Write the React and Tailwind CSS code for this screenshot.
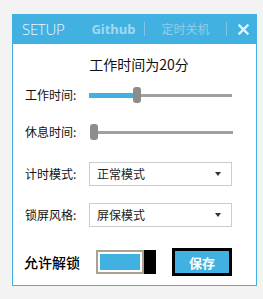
import { useState } from 'react';

const cjk = { fontFamily: '"Noto Sans CJK SC", "Noto Sans", sans-serif' };

function Slider({ value }) {
    // value in px of blue fill before thumb
    return (
        <div className="relative h-4 w-[143px] flex items-center">
            {value > 0 && <div className="h-[5px] bg-[#41b1e1]" style={{ width: value }} />}
            <div className="w-2 h-4 rounded-[3px] bg-[#8c8c8c] shrink-0" />
            <div className="flex-1 h-[3px] bg-[#a0a0a0]" />
        </div>
    );
}

function Select({ label }) {
    return (
        <div className="w-[143px] h-6 border border-[#cccccc] flex items-center justify-between pl-[7px] pr-[10px] bg-white">
            <span className="text-[12px] text-[#222] leading-none">{label}</span>
            <span className="w-0 h-0 border-l-[3px] border-r-[3px] border-t-[4px] border-l-transparent border-r-transparent border-t-[#333]" />
        </div>
    );
}

export default function App() {
    const [allow] = useState(true);

    return (
        <div className="w-[263px] h-[299px] bg-[#f3f3f3] pt-[14px] pl-[12px]" style={cjk}>
            <div className="w-[245px] h-[272px] border border-[#41b1e1] bg-white flex flex-col">
                <div className="h-[30px] bg-[#41b1e1] flex items-center -mx-px -mt-px pl-[10px]">
                    <span className="text-[15px] font-light text-[#eef8fd] tracking-[-0.3px] leading-none" style={{ fontFamily: '"Open Sans", sans-serif' }}>SETUP</span>
                    <span className="ml-[27px] text-[13px] font-bold text-[#a3d8f1] leading-none" style={{ fontFamily: '"Noto Sans", sans-serif' }}>Github</span>
                    <span className="ml-[9px] w-px h-[14px] bg-[#7cc7ea]" />
                    <span className="ml-[16px] text-[12px] text-[#8fcdea] leading-none">定时关机</span>
                    <span className="ml-[17px] w-px h-[14px] bg-[#7cc7ea]" />
                    <svg className="ml-[11px]" width="11" height="11" viewBox="0 0 11 11">
                        <path d="M1.5 1.5 L9.5 9.5 M9.5 1.5 L1.5 9.5" stroke="#e3f3fb" strokeWidth="2.4" strokeLinecap="square" />
                    </svg>
                </div>

                <div className="mt-[10px] h-5 flex items-center justify-center pl-[9px] text-[14px] text-[#111]">工作时间为20分</div>

                <div className="mt-[13px] flex items-center pl-[12px]">
                    <span className="w-[64px] text-[12px] text-[#111] leading-none">工作时间:</span>
                    <Slider value={44} />
                </div>

                <div className="mt-[21px] flex items-center pl-[12px]">
                    <span className="w-[64px] text-[12px] text-[#111] leading-none">休息时间:</span>
                    <div className="pl-px"><Slider value={0} /></div>
                </div>

                <div className="mt-[22px] flex items-center pl-[12px]">
                    <span className="w-[64px] text-[12px] text-[#111] leading-none">计时模式:</span>
                    <Select label="正常模式" />
                </div>

                <div className="mt-[17px] flex items-center pl-[12px]">
                    <span className="w-[64px] text-[12px] text-[#111] leading-none">锁屏风格:</span>
                    <Select label="屏保模式" />
                </div>

                <div className="mt-[21px] flex items-center pl-[11px]">
                    <span className="w-[72px] text-[14px] font-medium text-black leading-none">允许解锁</span>
                    <div className="w-[60px] h-6 flex">
                        <div className="flex-1 border-2 border-[#a8a196] p-[2px] bg-white">
                            <div className={allow ? 'w-full h-full bg-[#41b1e1]' : 'w-full h-full bg-white'} />
                        </div>
                        <div className="w-3 bg-black" />
                    </div>
                    <button className="ml-4 w-[60px] h-7 border-[3px] border-black bg-[#41b1e1] text-white text-[13px] font-bold flex items-center justify-center leading-none">保存</button>
                </div>
            </div>
        </div>
    );
}
